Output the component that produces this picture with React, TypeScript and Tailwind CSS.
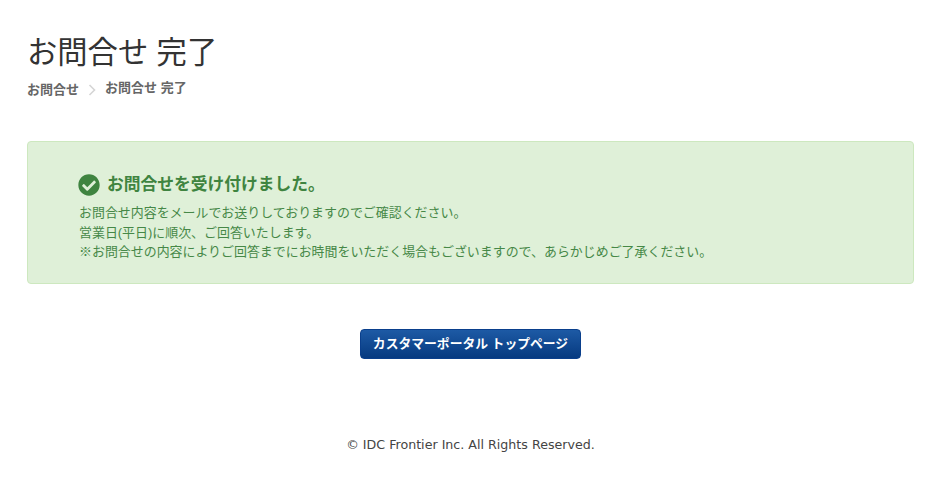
import { FaCheckCircle } from "react-icons/fa";

const fontClass = "font-['Liberation_Sans','Noto_Sans_CJK_JP',sans-serif]";

export default function App() {
  return (
    <div className={`${fontClass} min-h-[493px] bg-white px-[27px] text-[#333]`}>
      <h1 className="pt-[35px] text-[30.3px] leading-[36px] font-normal text-[#333]">お問合せ 完了</h1>

      <div className="mt-[6px] flex h-[28px] items-start text-[13px] font-bold text-[#666]">
        <span className="mt-[3px] leading-[20px]">お問合せ</span>
        <svg className="mt-[7px] ml-[9px] mr-[9px]" width="8" height="12" viewBox="0 0 8 12" fill="none">
          <path d="M1.5 1 L6.5 6 L1.5 11" stroke="#d5d5d5" strokeWidth="1.6" />
        </svg>
        <span className="mt-[1px] leading-[20px]">お問合せ 完了</span>
      </div>

      <div className="mt-[36px] h-[143px] w-[887px] rounded-[4px] border border-[#cde8bf] bg-[#dff0d8] pt-[32px] pl-[51px]">
        <div className="flex h-[22px] items-center gap-[7px]">
          <FaCheckCircle className="-ml-[1px] size-[22px] text-[#3f8440]" />
          <span className="text-[16.75px] font-bold text-[#3f8440]">お問合せを受け付けました。</span>
        </div>
        <div className="mt-[7px] text-[12.95px] leading-[19.5px] text-[#468847]">
          <p>お問合せ内容をメールでお送りしておりますのでご確認ください。</p>
          <p>営業日(平日)に順次、ご回答いたします。</p>
          <p>※お問合せの内容によりご回答までにお時間をいただく場合もございますので、あらかじめご了承ください。</p>
        </div>
      </div>

      <div className="mt-[45px] flex w-[887px] justify-center">
        <button className="h-[30px] w-[221px] rounded-[4px] border border-[#0a3f8c] bg-gradient-to-b from-[#1d5aa5] to-[#063a80] text-[12.8px] font-bold text-white">
          カスタマーポータル トップページ
        </button>
      </div>

      <footer className="mt-[77px] w-[887px] text-center font-['DejaVu_Sans',sans-serif] text-[12.65px] leading-[18px] text-[#444]">
        © IDC Frontier Inc. All Rights Reserved.
      </footer>
    </div>
  );
}
